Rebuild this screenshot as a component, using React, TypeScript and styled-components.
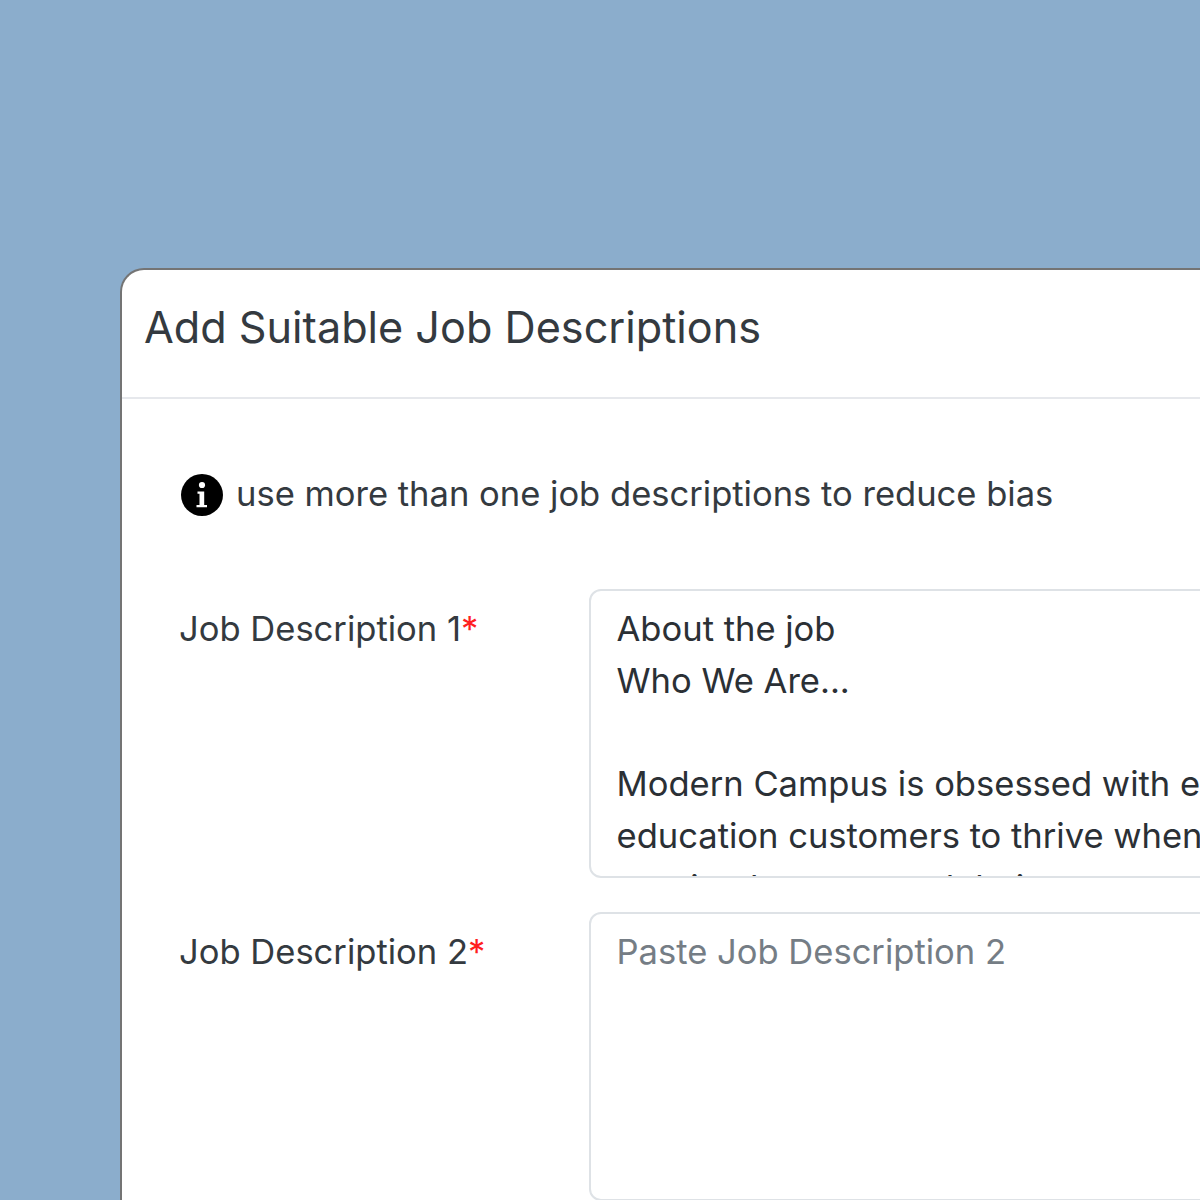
import styled, { createGlobalStyle } from 'styled-components';

const GlobalStyle = createGlobalStyle`
  html, body {
    margin: 0;
    height: 1200px;
    overflow: hidden;
    background: #8badcc;
  }
  * { box-sizing: border-box; }
`;

const Page = styled.div`
  width: 1200px;
  height: 1200px;
  overflow: hidden;
  padding: 268px 0 0 120px;
  font-family: Inter, "Liberation Sans", sans-serif;
  color: #343a40;
`;

const Modal = styled.section`
  width: 1400px;
  height: 1100px;
  background: #fff;
  border: 2px solid #747474;
  border-right: 0;
  border-bottom: 0;
  border-top-left-radius: 24px;
`;

const Header = styled.header`
  height: 129px;
  padding: 25px 0 0 22px;
  border-bottom: 2px solid #e6e8ec;
`;

const Title = styled.h1`
  margin: 0;
  font-size: 43.2px;
  line-height: 64.8px;
  font-weight: 400;
  color: #343a40;
`;

const Body = styled.div`
  padding: 69px 0 0 57px;
`;

const Notice = styled.p`
  display: flex;
  align-items: center;
  gap: 12px;
  margin: 0 0 69px 1px;
  font-size: 34.56px;
  line-height: 52px;
`;

const Field = styled.div`
  display: flex;
  margin-bottom: 34px;
`;

const Label = styled.label`
  flex: 0 0 410px;
  padding-top: 14px;
  font-size: 34.56px;
  line-height: 52px;
  color: #343a40;
`;

const Required = styled.span`
  color: #ff1f1f;
`;

const Input = styled.textarea`
  display: block;
  flex: 0 0 1000px;
  height: 289px;
  padding: 11.800px 25.500px;
  border: 2px solid #dee2e6;
  border-radius: 12px;
  background: #fff;
  resize: none;
  overflow: hidden;
  outline: none;
  white-space: pre;
  font-family: inherit;
  font-size: 34.56px;
  line-height: 51.84px;
  color: #2b3035;

  &::placeholder {
    color: #757d85;
    opacity: 1;
  }
`;

const FIRST_JOB = `About the job
Who We Are...

Modern Campus is obsessed with empowering its higher
education customers to thrive when
earning learners and their trust`;

function InfoIcon() {
  return (
    <svg width="44" height="44" viewBox="0 0 44 44" aria-hidden="true">
      <circle cx="22" cy="23" r="21" fill="#000" />
      <circle cx="22" cy="13" r="3.100" fill="#fff" />
      <path
        fill="#fff"
        d="M17.500 19.500h6.700v13.500h2.800v2.200h-10.500v-2.200h3v-11.300h-2z"
      />
    </svg>
  );
}

function App() {
  return (
    <Page>
      <GlobalStyle />
      <Modal>
        <Header>
          <Title>Add Suitable Job Descriptions</Title>
        </Header>
        <Body>
          <Notice>
            <InfoIcon />
            use more than one job descriptions to reduce bias
          </Notice>
          <Field>
            <Label>Job Description 1<Required>*</Required></Label>
            <Input readOnly value={FIRST_JOB} />
          </Field>
          <Field>
            <Label>Job Description 2<Required>*</Required></Label>
            <Input readOnly placeholder="Paste Job Description 2" />
          </Field>
        </Body>
      </Modal>
    </Page>
  );
}

export default App;
